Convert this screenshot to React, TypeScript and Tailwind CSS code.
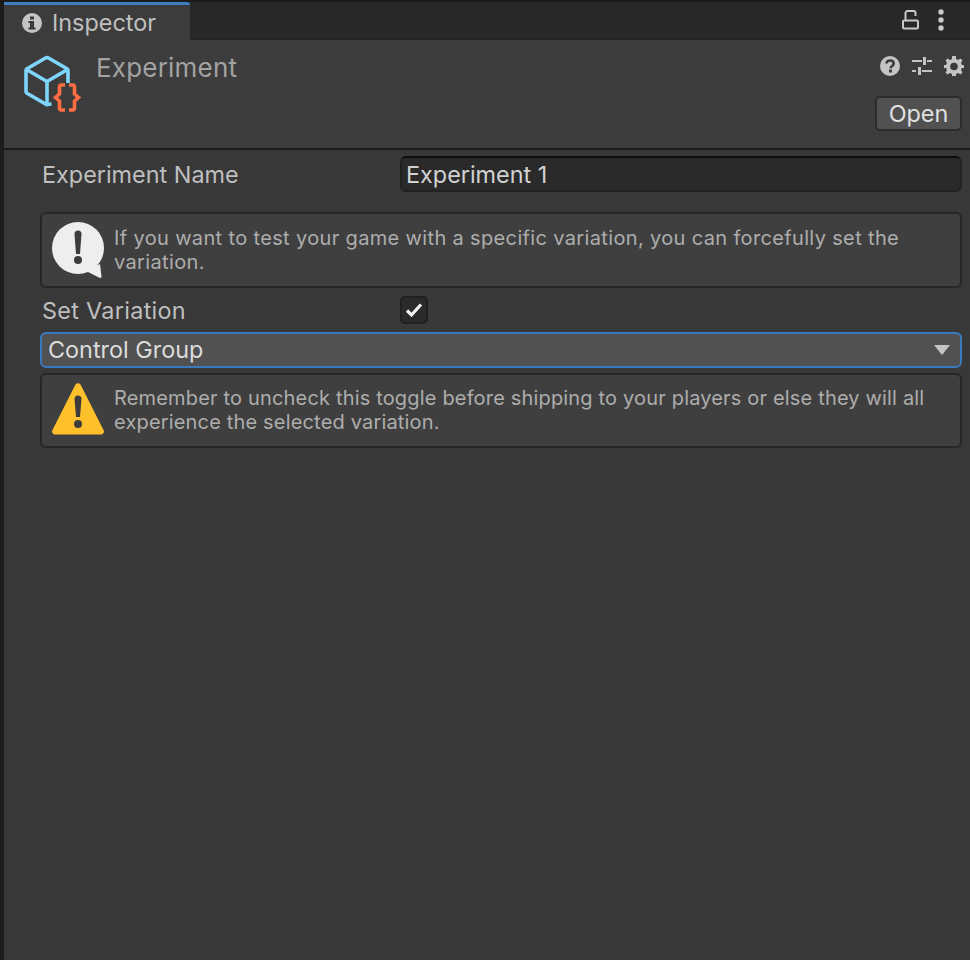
import React from "react";

const font = { fontFamily: "Inter, 'Noto Sans', sans-serif" };

function InfoIcon() {
  return (
    <svg width="20" height="20" viewBox="0 0 20 20" className="shrink-0">
      <circle cx="10" cy="10" r="10" fill="#c4c4c4" />
      <rect x="8" y="3.5" width="4" height="3" fill="#383838" />
      <path d="M6.5 8h5.5v6.5h1.5V16.5h-7v-2h1.5v-4.500h-1.500z" fill="#383838" />
    </svg>
  );
}

function AssetIcon() {
  return (
    <svg width="62" height="62" viewBox="0 0 62 62" fill="none" className="shrink-0">
      <path d="M47 30V17.500a2 2 0 0 0-1-1.700L27.500 5a3 3 0 0 0-3 0L6 15.800a2 2 0 0 0-1 1.700v21a2 2 0 0 0 1 1.700L24.500 51a3 3 0 0 0 3 .3l3-.3" stroke="#7fd6fc" strokeWidth="3.600" strokeLinejoin="round" />
      <path d="M5.500 16.500L26 28.500l20.500-12M26 28.500V52" stroke="#7fd6fc" strokeWidth="3.600" />
      <path d="M44 32h-3.500a2 2 0 0 0-2 2v7l-4 3.500 4 3.500v7a2 2 0 0 0 2 2H44M48 32h3.500a2 2 0 0 1 2 2v7l4 3.500-4 3.500v7a2 2 0 0 1-2 2H48" stroke="#ff6d42" strokeWidth="3.600" />
    </svg>
  );
}

function Lock() {
  return (
    <svg width="18" height="20" viewBox="0 0 18 20" fill="none" stroke="#c8c8c8" strokeWidth="2">
      <rect x="1" y="10.5" width="15" height="8" rx="1" />
      <path d="M3.500 10.500V3a2 2 0 0 1 2-2h6a2 2 0 0 1 2 2v3" />
    </svg>
  );
}

function Dots() {
  return (
    <svg width="6" height="22" viewBox="0 0 6 22" fill="#c8c8c8">
      <circle cx="3" cy="3" r="2.700" />
      <circle cx="3" cy="11" r="2.700" />
      <circle cx="3" cy="19" r="2.700" />
    </svg>
  );
}

function Help() {
  return (
    <svg width="20" height="20" viewBox="0 0 20 20">
      <circle cx="10" cy="10" r="10" fill="#c4c4c4" />
      <path d="M6.500 7.500C6.500 5.500 8 4.500 10 4.500s3.700 1 3.700 3c0 2.700-3 2.300-3 4.700" stroke="#3c3c3c" strokeWidth="2.600" fill="none" />
      <rect x="9" y="13.500" width="3" height="3" fill="#3c3c3c" />
    </svg>
  );
}

function Sliders() {
  return (
    <svg width="20" height="20" viewBox="0 0 20 20" fill="#c4c4c4">
      <rect x="0" y="4" width="10" height="2" />
      <rect x="11" y="1" width="3" height="8" />
      <rect x="15" y="4" width="5" height="2" />
      <rect x="0" y="14" width="4" height="2" />
      <rect x="6" y="11" width="3" height="8" />
      <rect x="10" y="14" width="10" height="2" />
    </svg>
  );
}

function Gear() {
  return (
    <svg width="20" height="20" viewBox="0 0 20 20">
      <path d="M8 0h4v3l2 1 2.500-1.500 2 2L17 7l1 2h2v3h-2l-1 2 1.500 2.500-2 2L14 17l-2 1v2H8v-2l-2-1-2.500 1.500-2-2L3 14l-1-2H0V9h2l1-2-1.500-2.500 2-2L6 4l2-1z" fill="#c4c4c4" />
      <circle cx="10" cy="10.500" r="3.800" fill="#3c3c3c" />
    </svg>
  );
}

function SpeechMark() {
  return (
    <svg width="52" height="56" viewBox="0 0 52 56" className="shrink-0">
      <circle cx="26" cy="26" r="26" fill="#eeeeee" />
      <path d="M34 49l14-7 1.500 12.500a1.500 1.500 0 0 1-2 1.300z" fill="#eeeeee" />
      <path d="M22.500 12a3.500 3.500 0 0 1 7 0l-1.500 20h-4z" fill="#3c3c3c" />
      <circle cx="26" cy="38" r="4" fill="#3c3c3c" />
    </svg>
  );
}

function WarnMark() {
  return (
    <svg width="52" height="52" viewBox="0 0 52 52" className="shrink-0 mb-[2px]">
      <path d="M23.500 1.500a3 3 0 0 1 5 0l23 45.500a3 3 0 0 1-2.500 4.500H3A3 3 0 0 1 .500 47z" fill="#ffc12b" />
      <path d="M22.500 16a3.500 3.500 0 0 1 7 0l-1.500 18h-4z" fill="#3c3c3c" />
      <circle cx="26" cy="41" r="4" fill="#3c3c3c" />
    </svg>
  );
}

function HelpBox({ icon, children, className, textClass }: { icon: React.ReactNode; children: React.ReactNode; className: string; textClass: string }) {
  return (
    <div className={`flex items-center border-2 border-[#262626] rounded-[6px] bg-[#3f3f3f] pl-[10px] pr-2 ${className}`}>
      {icon}
      <p className={`ml-[10px] text-[20px] leading-[24px] text-[#adadad] ${textClass}`}>{children}</p>
    </div>
  );
}

export default function App() {
  return (
    <div className="w-full h-[960px] overflow-hidden bg-[#1c1c1c] pl-1 pt-[2px] flex flex-col" style={font}>
      <div className="h-[38px] bg-[#282828] border-b border-[#232323] flex items-start justify-between shrink-0">
        <div className="relative w-[186px] h-[38px] bg-[#3c3c3c] rounded-tr-[3px] border-t-[3px] border-[#3e7dc0] flex items-center pl-[18px]">
          <InfoIcon />
          <span className="ml-[10px] text-[23.4px] text-[#c0c0c0]">Inspector</span>
        </div>
        <div className="flex items-center gap-[18px] pr-[26px] pt-[7px]">
          <Lock />
          <Dots />
        </div>
      </div>
      <div className="h-[108px] bg-[#3c3c3c] shrink-0 flex pl-[17px] pr-2">
        <div className="pt-[13px]"><AssetIcon /></div>
        <div className="ml-[13px] flex-1 pt-[11px] text-[26px] leading-[34px] text-[#a2a2a2] tracking-[0.2px]">Experiment</div>
        <div className="flex flex-col items-end pt-[16px]">
          <div className="flex items-center gap-[12px] -mr-[2px]">
            <Help />
            <Sliders />
            <Gear />
          </div>
          <button className="mt-[20px] w-[87px] h-[35px] rounded-[5px] bg-[#515151] border-2 border-[#2c2c2c] text-[23.4px] leading-[28px] text-[#e0e0e0]">Open</button>
        </div>
      </div>
      <div className="flex-1 bg-[#383838] border-t-2 border-[#1a1a1a] pl-[36px] pr-2 flex flex-col">
        <div className="flex items-center h-[36px] mt-[6px]">
          <label className="w-[360px] pl-[2px] pt-[2px] text-[23.4px] text-[#bfbfbf]">Experiment Name</label>
          <div className="flex-1 h-[36px] rounded-[6px] bg-[#2a2a2a] border-2 border-[#212121] border-t-[#0d0d0d] pl-[4px] text-[23.4px] leading-[33px] text-[#d2d2d2]">Experiment 1</div>
        </div>
        <HelpBox className="mt-[20px] h-[76px]" textClass="tracking-[0.35px]" icon={<SpeechMark />}>
          If you want to test your game with a specific variation, you can forcefully set the variation.
        </HelpBox>
        <div className="flex items-center h-[28px] mt-[8px]">
          <label className="w-[360px] pl-[2px] pt-[2px] text-[23.4px] tracking-[0.3px] text-[#bfbfbf]">Set Variation</label>
          <div className="w-[28px] h-[28px] rounded-[5px] bg-[#2a2a2a] border-2 border-[#202020] flex items-center justify-center">
            <svg width="18" height="16" viewBox="0 0 18 16" fill="none" stroke="#f0f0f0" strokeWidth="3.200">
              <path d="M2 8.500l4.500 4.500L16 2.500" />
            </svg>
          </div>
        </div>
        <div className="mt-[8px] h-[36px] rounded-[6px] bg-[#515151] border-2 border-[#3a79bb] flex items-center justify-between pl-[6px] pr-[10px]">
          <span className="text-[23.4px] text-[#dcdcdc]">Control Group</span>
          <svg width="16" height="10" viewBox="0 0 16 10" fill="#c4c4c4"><path d="M0 0h16l-8 10z" /></svg>
        </div>
        <HelpBox className="mt-[5px] h-[75px] pb-[2px]" textClass="tracking-[0.17px]" icon={<WarnMark />}>
          Remember to uncheck this toggle before shipping to your players or else they will all experience the selected variation.
        </HelpBox>
      </div>
    </div>
  );
}
